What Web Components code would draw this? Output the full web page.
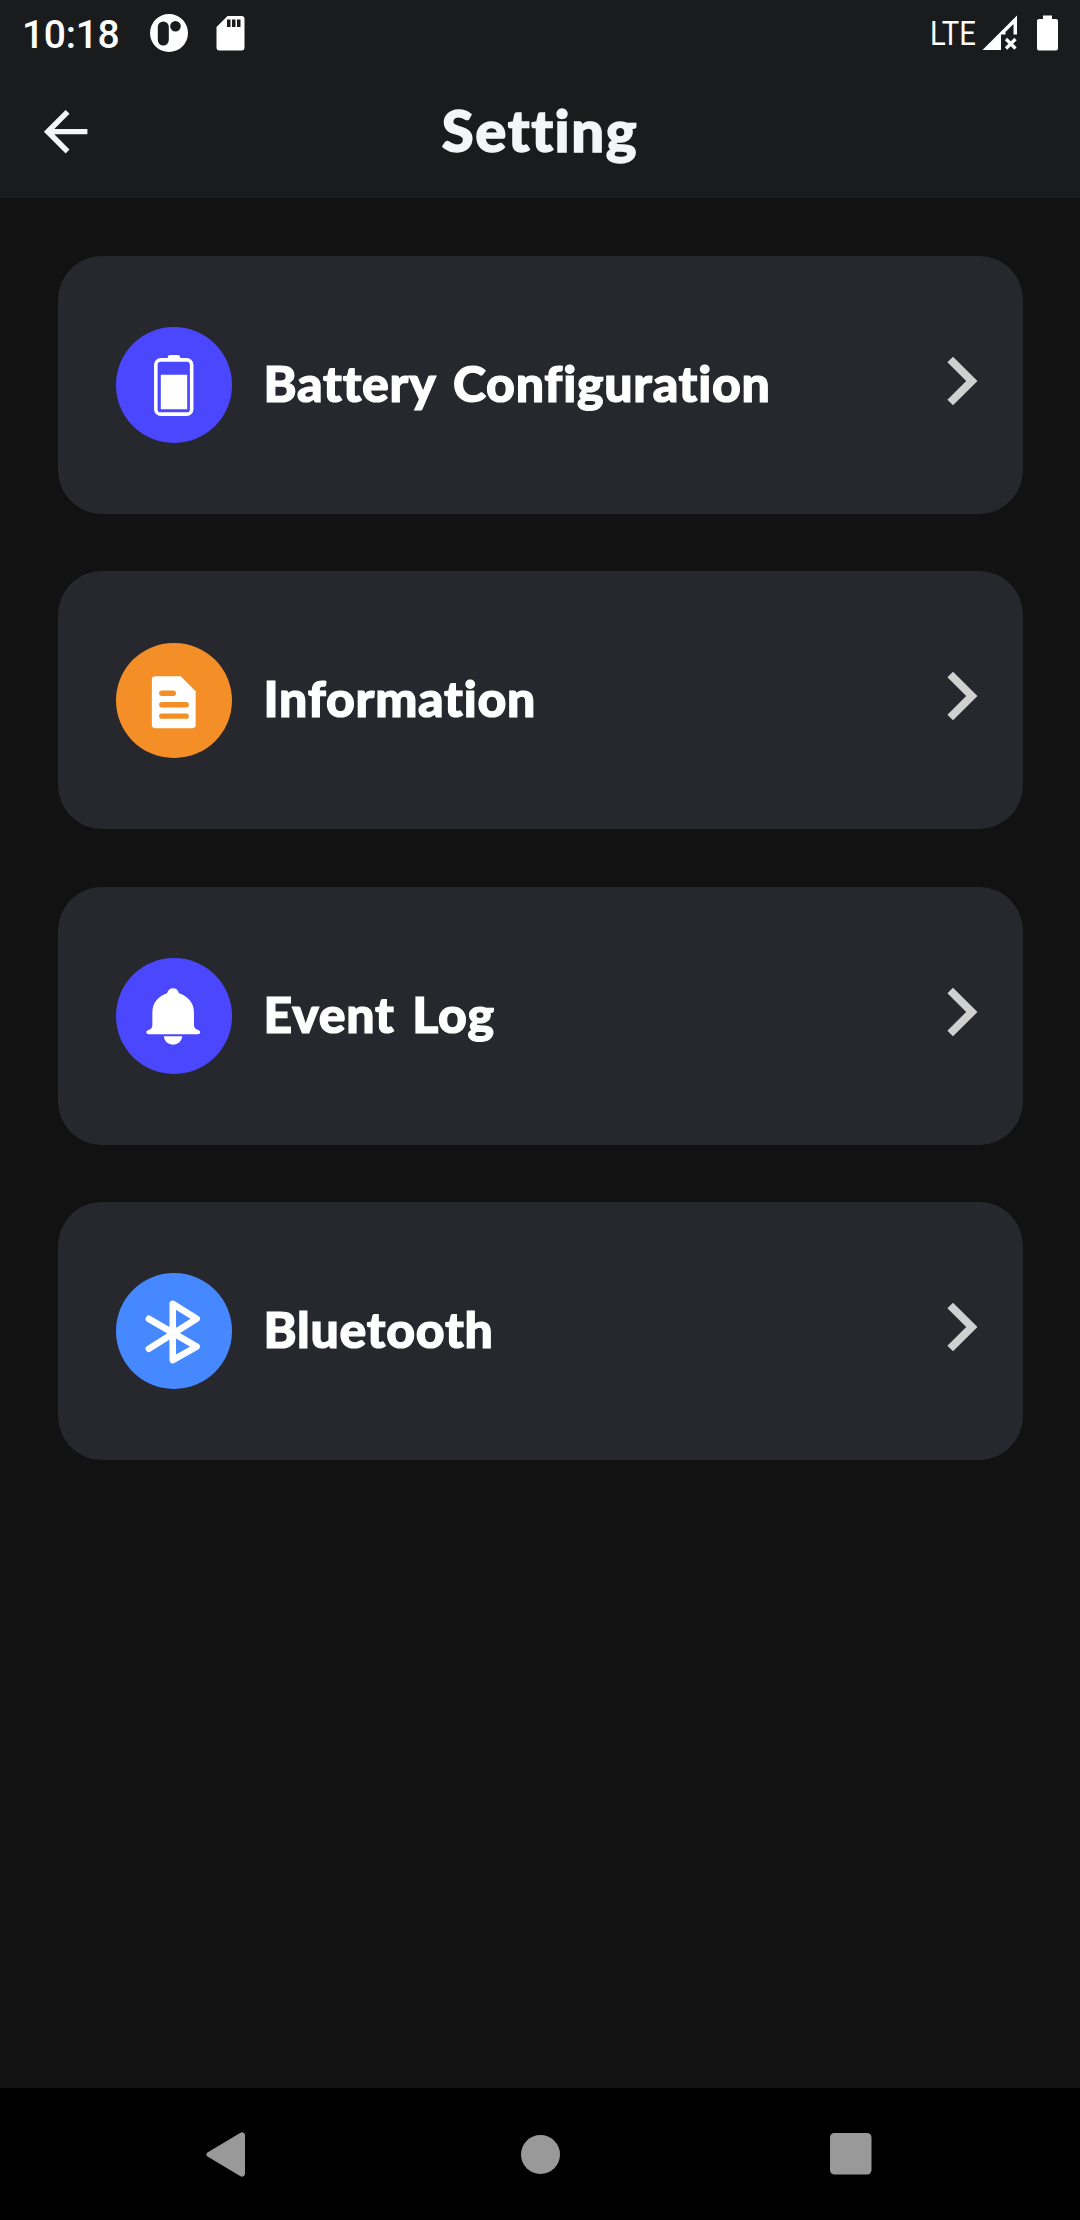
<!DOCTYPE html>
<html lang="en">
<head>
<meta charset="UTF-8">
<meta name="viewport" content="width=device-width, initial-scale=1.0">
<title>Setting</title>
<style>
  body {
    margin: 0;
    background: #121212;
    font-family: Lato, "Open Sans", sans-serif;
    font-variant-ligatures: none;
  }
</style>
</head>
<body>
<setting-screen></setting-screen>

<script>
class StatusBar extends HTMLElement {
  connectedCallback() {
    this.attachShadow({ mode: 'open' });
    this.shadowRoot.innerHTML = `
      <style>
        :host {
          display: flex;
          align-items: center;
          justify-content: space-between;
          height: 66px;
          padding: 0 22px 0 22px;
          color: #fff;
          font-family: Roboto, sans-serif;
        }
        .group {
          display: flex;
          align-items: center;
        }
        .time {
          width: 128px;
          font-size: 39px;
          font-weight: 500;
          letter-spacing: -0.3px;
          line-height: 66px;
          padding-top: 2px;
          box-sizing: border-box;
          height: 66px;
          white-space: nowrap;
        }
        svg {
          display: block;
          fill: #fff;
        }
        .sd { margin-left: 28px; }
        .network {
          width: 62px;
          margin-right: -10px;
          font-size: 34px;
          line-height: 66px;
          transform: scaleX(0.86);
          transform-origin: left;
        }
        .signal { margin-right: 20px; }
      </style>
      <div class="group">
        <div class="time">10:18</div>
        <svg width="38" height="66" viewBox="150 0 38 66">
          <path fill-rule="evenodd" d="M169 14a19 19 0 1 0 0 38a19 19 0 1 0 0-38zM163.300 21.500a5.500 5.500 0 0 1 5.500 5.500v13a5.500 5.500 0 0 1-11 0v-13a5.500 5.500 0 0 1 5.500-5.500zM175.500 21a5.300 5.300 0 1 1 0 10.600a5.300 5.300 0 1 1 0-10.600z"/>
        </svg>
        <svg class="sd" width="29" height="66" viewBox="216 0 29 66">
          <path fill-rule="evenodd" d="M227.500 16H241.500a3 3 0 0 1 3 3V47.500a3 3 0 0 1-3 3H219.500a3 3 0 0 1-3-3V27zM227 19.500v7.500h3.500v-7.500zM232 19.500v7.500h3.500v-7.500zM237 19.500v7.500h3.500v-7.500z"/>
        </svg>
      </div>
      <div class="group">
        <div class="network">LTE</div>
        <svg class="signal" width="35" height="66" viewBox="982 0 35 66">
          <path d="M982.500 50L1017 15.500V34.500H1013.500V24L1005.500 32V34.500H1001V50z"/>
          <path d="M1006 39l9.500 9.500M1015.500 39l-9.500 9.500" fill="none" stroke="#fff" stroke-width="3.200"/>
        </svg>
        <svg width="21" height="66" viewBox="1037 0 21 66">
          <path d="M1043 15.500h9v3.500h4a2 2 0 0 1 2 2V48.500a2 2 0 0 1-2 2H1039a2 2 0 0 1-2-2V21a2 2 0 0 1 2-2h4z"/>
        </svg>
      </div>
    `;
  }
}

class TitleBar extends HTMLElement {
  connectedCallback() {
    this.attachShadow({ mode: 'open' });
    this.shadowRoot.innerHTML = `
      <style>
        :host {
          display: grid;
          grid-template-columns: 100px 1fr 100px;
          align-items: center;
          height: 132px;
          color: #f4f5f9;
        }
        svg {
          display: block;
          margin-left: 33px;
          fill: #f4f5f5;
        }
        h1 {
          margin: 0;
          padding-bottom: 5px;
          text-align: center;
          font-size: 58px;
          font-weight: 900;
          letter-spacing: 1.600px;
          line-height: 127px;
          -webkit-text-stroke: 1.400px currentColor;
        }
      </style>
      <svg width="65.300" height="65.300" viewBox="0 0 24 24">
        <path d="M20 11H7.830l5.590-5.590L12 4l-8 8 8 8 1.410-1.410L7.830 13H20z"/>
      </svg>
      <h1><slot></slot></h1>
    `;
  }
}

class SettingCard extends HTMLElement {
  connectedCallback() {
    this.attachShadow({ mode: 'open' });
    this.shadowRoot.innerHTML = `
      <style>
        :host {
          display: flex;
          align-items: center;
          height: 258px;
          padding: 0 45.500px 0 58px;
          box-sizing: border-box;
          border-radius: 44px;
          background: #27282d;
          color: #fff;
        }
        .badge {
          width: 115.500px;
          height: 115.500px;
          border-radius: 50%;
          background: var(--badge);
        }
        .label {
          flex: 1;
          padding: 0 0 4px 32px;
          font-size: 50px;
          font-weight: 900;
          letter-spacing: 0.750px;
          word-spacing: 5px;
          line-height: 60px;
          white-space: nowrap;
          -webkit-text-stroke: 1.200px currentColor;
        }
        .chevron {
          display: block;
          margin-bottom: 8px;
        }
      </style>
      <div class="badge"><slot name="icon"></slot></div>
      <div class="label"><slot></slot></div>
      <svg class="chevron" width="31" height="50" viewBox="0 0 31 50">
        <path d="M3.200 3.500L24.800 25 3.200 46.500" fill="none" stroke="#d0d0d0" stroke-width="8"/>
      </svg>
    `;
  }
}

class NavBar extends HTMLElement {
  connectedCallback() {
    this.attachShadow({ mode: 'open' });
    this.shadowRoot.innerHTML = `
      <style>
        :host {
          display: flex;
          align-items: center;
          justify-content: space-between;
          height: 132px;
          padding: 0 208px 0 206px;
          box-sizing: border-box;
          background: #000;
        }
        svg {
          display: block;
          fill: #999;
        }
        .home { margin-left: 6px; }
      </style>
      <svg width="39" height="45" viewBox="0 0 39 45">
        <path d="M1.500 20.500L34.500 .8a3 3 0 0 1 4.500 2.500V41.700a3 3 0 0 1-4.500 2.500L1.500 24.500a2.300 2.300 0 0 1 0-4z"/>
      </svg>
      <svg class="home" width="39" height="39" viewBox="0 0 39 39"><circle cx="19.500" cy="19.500" r="19.500"/></svg>
      <svg width="42" height="42" viewBox="0 0 42 42"><rect width="41.500" height="41.500" rx="4.500"/></svg>
    `;
  }
}

class SettingScreen extends HTMLElement {
  connectedCallback() {
    this.attachShadow({ mode: 'open' });
    this.shadowRoot.innerHTML = `
      <style>
        :host {
          display: flex;
          flex-direction: column;
          height: 2220px;
          background: #121212;
        }
        header { background: #1a1b1c; }
        main {
          flex: 1;
          display: flex;
          flex-direction: column;
          gap: 57.400px;
          padding: 58px 57px 0 58px;
        }
        setting-card svg {
          display: block;
          width: 100%;
          height: 100%;
          fill: #fff;
        }
      </style>
      <header>
        <status-bar></status-bar>
        <title-bar>Setting</title-bar>
      </header>
      <main>
        <setting-card style="--badge: #4b47ff">
          <svg slot="icon" viewBox="0 0 116 116">
            <rect x="40" y="33" width="36" height="54.500" rx="5" fill="none" stroke="#fff" stroke-width="3.600"/>
            <path d="M52 32v-1.500a2.500 2.500 0 0 1 2.500-2.500h7.500a2.500 2.500 0 0 1 2.500 2.500V32zM45 48h26.500v34.500H45z"/>
          </svg>
          Battery Configuration
        </setting-card>
        <setting-card style="--badge: #f48e26">
          <svg slot="icon" viewBox="0 0 116 116">
            <path d="M39.500 33.500H65L80 48.500V82a3.500 3.500 0 0 1-3.500 3.500H39.500A3.500 3.500 0 0 1 36 82V37a3.500 3.500 0 0 1 3.500-3.500z"/>
            <path d="M46 50.500H57.500M46 62H70.500M46 73.500H70.500" stroke="#f48e26" stroke-width="5.400" stroke-linecap="round"/>
          </svg>
          Information
        </setting-card>
        <setting-card style="--badge: #4b47ff">
          <svg slot="icon" viewBox="0 0 116 116">
            <path d="M57.300 30.500c3 0 5.200 2 6 5 9.200 3 15 10 15 19V67c0 3 1.200 4.200 3.500 5 1.600.5 2.700 1.200 2.700 2.500 0 1.300-1 2-2.500 2H33c-1.500 0-2.500-.7-2.500-2 0-1.300 1.100-2 2.700-2.500 2.300-.8 3.300-2 3.300-5V54.500c0-9 5.600-16 14.800-19 .8-3 3-5 6-5zM48 78.500H66.500a9.250 8.500 0 0 1-18.500 0z"/>
          </svg>
          Event Log
        </setting-card>
        <setting-card style="--badge: #4688ff">
          <svg slot="icon" viewBox="0 0 116 116">
            <path d="M33 46L81 74 57 87.500V31L81 46 33 76" fill="none" stroke="#fff" stroke-width="6.600" stroke-linecap="round" stroke-linejoin="round"/>
          </svg>
          Bluetooth
        </setting-card>
      </main>
      <nav-bar></nav-bar>
    `;
  }
}

customElements.define('status-bar', StatusBar);
customElements.define('title-bar', TitleBar);
customElements.define('setting-card', SettingCard);
customElements.define('nav-bar', NavBar);
customElements.define('setting-screen', SettingScreen);
</script>
</body>
</html>
